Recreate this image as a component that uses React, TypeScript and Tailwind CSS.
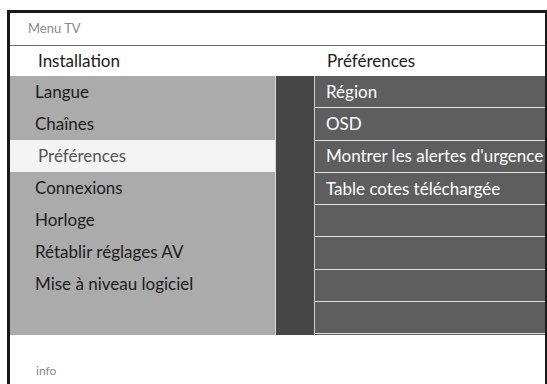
import React from "react";

const leftItems = [
  "Langue",
  "Chaînes",
  "Préférences",
  "Connexions",
  "Horloge",
  "Rétablir réglages AV",
  "Mise à niveau logiciel",
];

const rightItems = [
  "Région",
  "OSD",
  "Montrer les alertes d'urgence",
  "Table cotes téléchargée",
  "",
  "",
  "",
  "",
];

export default function App() {
  return (
    <div
      className="w-[547px] h-[384px] bg-white pl-[7px] pt-[10px] overflow-hidden"
      style={{ fontFamily: "Lato, 'Open Sans', sans-serif" }}
    >
      <div className="h-[374px] border-l-[3px] border-t-[3px] border-r-[2px] border-[#1a1a1a] flex flex-col">
        <div className="h-[32px] flex items-center pl-[18px] text-[13px] text-[#8a8a8a]">
          Menu TV
        </div>
        <div className="h-px bg-[#6e6e6e]" />
        <div className="h-[30px] flex items-center text-[17px] text-[#1a1a1a]">
          <div className="w-[266px] pl-[28px]">Installation</div>
          <div className="w-[39px]" />
          <div className="pl-[12px]">Préférences</div>
        </div>
        <div className="h-[259px] flex">
          <div className="w-[266px] bg-[#ababab] border-r border-[#d8d8d8] flex flex-col">
            {leftItems.map((t) => (
              <div
                key={t}
                className={
                  t === "Préférences"
                    ? "h-[32px] flex items-center pl-[28px] text-[17px] bg-[#f4f4f4] text-[#555]"
                    : "h-[32px] flex items-center pl-[25px] text-[17px] text-[#1c1c1c]"
                }
              >
                {t}
              </div>
            ))}
          </div>
          <div className="w-[38px] bg-[#474747]" />
          <div className="flex-1 bg-[#5e5e5e] border-l border-[#cfcfcf] flex flex-col">
            {rightItems.map((t, i) => (
              <div
                key={i}
                className="h-[32.25px] flex items-center pl-[11px] text-[17px] text-white border-b border-[#e2e2e2] whitespace-nowrap"
              >
                {t}
              </div>
            ))}
          </div>
        </div>
        <div className="flex-1 flex items-end pb-[4px] pl-[26px] text-[12px] text-[#8a8a8a]">
          info
        </div>
      </div>
    </div>
  );
}
